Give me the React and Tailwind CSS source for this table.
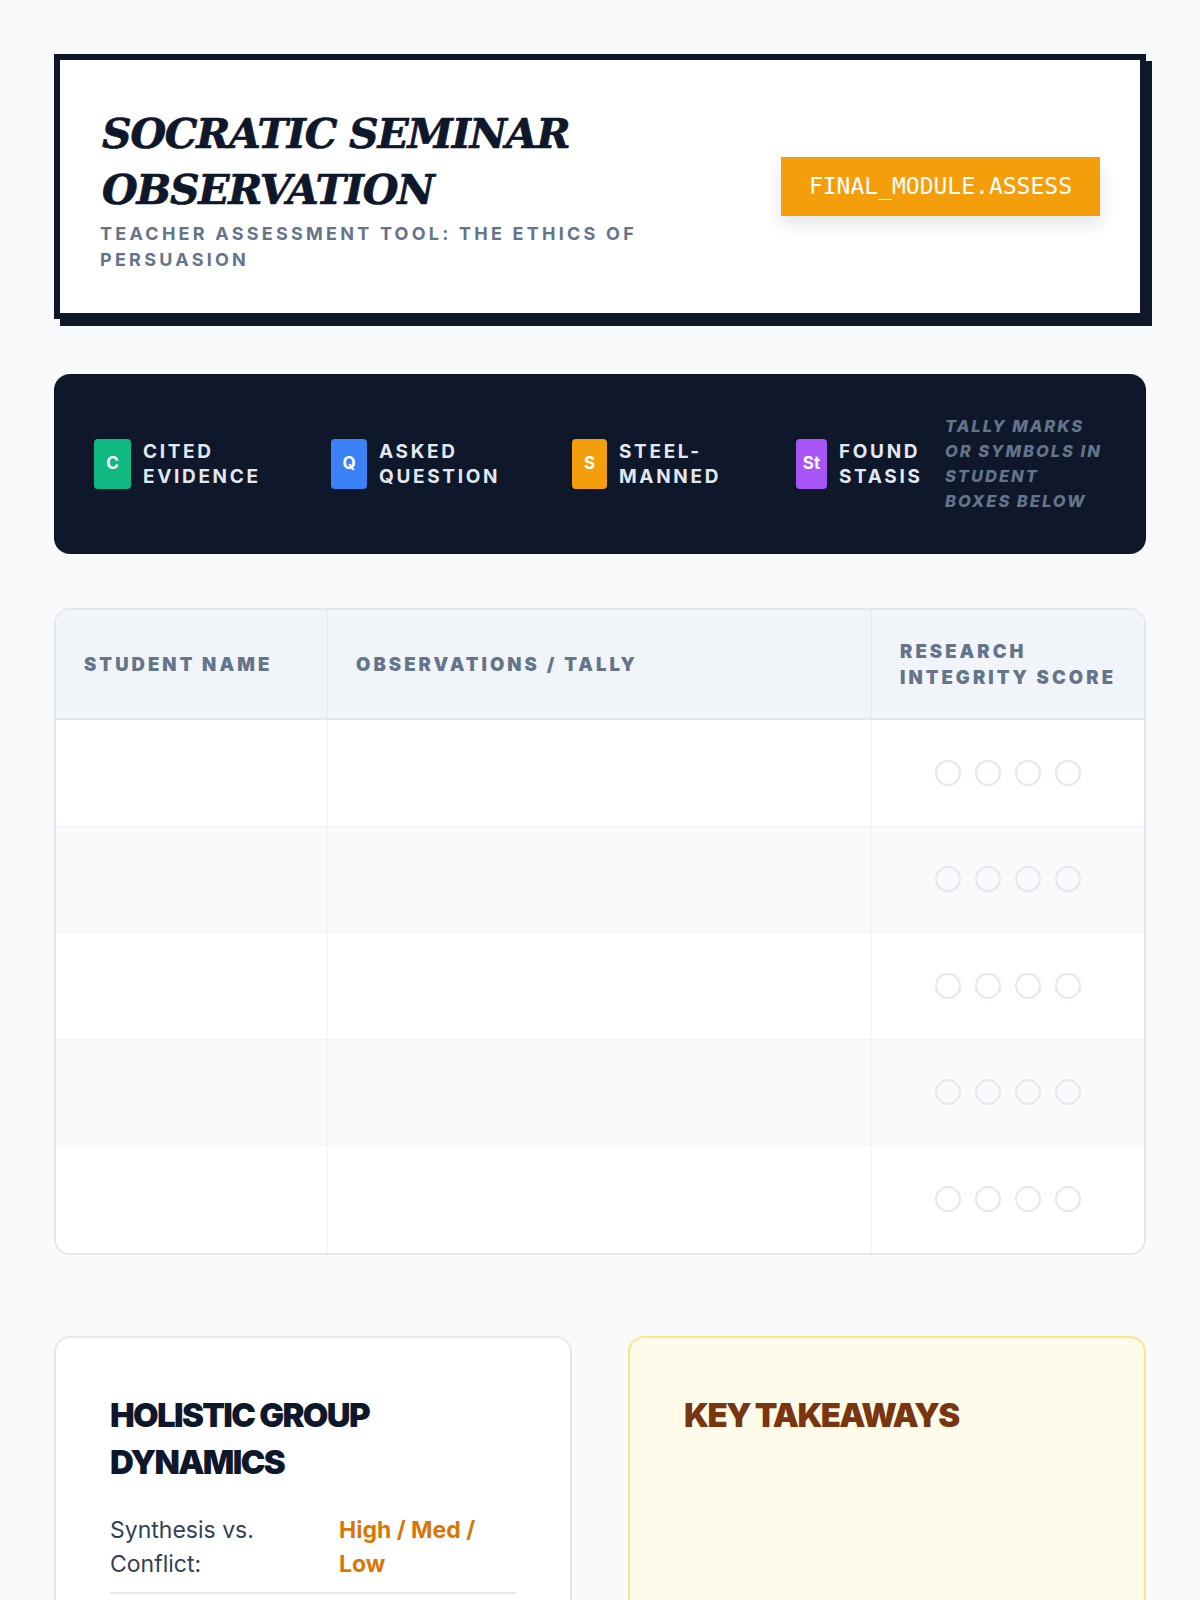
import React from "react";

const legend = [
  { key: "C", label: "Cited Evidence", color: "bg-[#10b981]", w: "w-[213px]", bw: "w-[37px]" },
  { key: "Q", label: "Asked Question", color: "bg-[#3b82f6]", w: "w-[217px]", bw: "w-[36px]" },
  { key: "S", label: "Steel-Manned", color: "bg-[#f59e0b]", w: "w-[200px]", bw: "w-[35px]" },
  { key: "St", label: "Found Stasis", color: "bg-[#a855f7]", w: "w-[125px]", bw: "w-[31px]" },
];

function Circles() {
  return (
    <div className="flex items-center justify-center gap-[14px]">
      {[0, 1, 2, 3].map((i) => (
        <span key={i} className="block h-[26px] w-[26px] rounded-full border-2 border-[#e2e8f0]" />
      ))}
    </div>
  );
}

export default function App() {
  const rows = [0, 1, 2, 3, 4];
  return (
    <div className="min-h-screen bg-[#f8fafc] px-[54px] pt-[54px] pb-16 font-['Inter',sans-serif]">
      {/* Header */}
      <header className="flex items-center justify-between border-[6px] border-[#0f172a] bg-white p-10 shadow-[6px_7px_0_#0f172a]">
        <div className="w-[560px]">
          <h1 className="mt-[6px] pl-[2px] font-['DejaVu_Serif',serif] text-[41px] font-bold italic uppercase leading-[56px] tracking-[-0.03em] text-[#0f172a] [-webkit-text-stroke:0.7px_#0f172a]">
            Socratic Seminar Observation
          </h1>
          <p className="mt-[3px] text-[18px] font-bold uppercase leading-[26px] tracking-[0.18em] text-[#64748b]">
            Teacher Assessment Tool: The Ethics of Persuasion
          </p>
        </div>
        <div className="bg-[#f59e0b] px-7 py-[13px] font-['DejaVu_Sans_Mono',monospace] text-[23px] leading-[33px] text-white shadow-[0_8px_16px_rgba(15,23,42,0.12)]">
          FINAL_MODULE.ASSESS
        </div>
      </header>

      {/* Legend */}
      <section className="mt-[55px] flex items-center gap-6 rounded-2xl bg-[#0f172a] p-10">
        {legend.map((l) => (
          <div key={l.key} className={`flex shrink-0 items-stretch gap-3 ${l.w}`}>
            <span className={`flex shrink-0 items-center justify-center rounded text-[17px] font-bold text-white ${l.color} ${l.bw}`}>
              {l.key}
            </span>
            <span className="text-[19px] font-bold uppercase leading-[25px] tracking-[0.14em] text-[#e2e8f0]">
              {l.label}
            </span>
          </div>
        ))}
        <p className="flex-1 text-[16.5px] font-extrabold italic uppercase leading-[25px] tracking-[0.12em] text-[#64748b]">
          Tally marks or symbols in student boxes below
        </p>
      </section>

      {/* Table */}
      <section className="mt-[54px] overflow-hidden rounded-2xl border-2 border-[#e2e8f0] bg-white">
        <div className="grid grid-cols-[1fr_2fr_1fr] border-b-2 border-[#e2e8f0] bg-[#f1f5f9]">
          {["Student Name", "Observations / Tally", "Research Integrity Score"].map((h, i) => (
            <div
              key={h}
              className={`flex items-center py-[28px] pl-7 pr-3 text-[18.5px] font-black uppercase leading-[26px] tracking-[0.165em] text-[#64748b] ${i < 2 ? "border-r border-[#e2e8f0]" : ""}`}
            >
              {h}
            </div>
          ))}
        </div>
        {rows.map((r) => (
          <div
            key={r}
            className={`grid h-[106.5px] grid-cols-[1fr_2fr_1fr] ${r < 4 ? "border-b border-[#f1f5f9]" : ""} ${r % 2 === 1 ? "bg-[#f8fafc]" : "bg-white"}`}
          >
            <div className="border-r border-[#f1f5f9]" />
            <div className="border-r border-[#f1f5f9]" />
            <div className="flex items-center justify-center">
              <Circles />
            </div>
          </div>
        ))}
      </section>

      {/* Bottom cards */}
      <section className="mt-[81px] grid grid-cols-2 gap-14">
        <div className="rounded-2xl border-2 border-[#e2e8f0] bg-white px-[54px] pt-[54px] pb-[54px]">
          <h2 className="mb-[13px] text-[33px] font-black uppercase leading-[47px] tracking-[-0.05em] text-[#0f172a]">
            Holistic Group Dynamics
          </h2>
          {[
            ["Synthesis vs. Conflict:", "High / Med / Low"],
            ["Equity of Voice:", "High / Med / Low"],
            ["Depth of Inquiry:", "High / Med / Low"],
          ].map(([a, b]) => (
            <div key={a} className="flex border-b-2 border-[#e2e8f0] pt-[14px] pb-[11px] text-[23px] leading-[34px]">
              <span className="w-[229px] shrink-0 pr-8 text-[#334155]">{a}</span>
              <span className="w-[150px] font-bold text-[#d97706]">{b}</span>
            </div>
          ))}
        </div>
        <div className="rounded-2xl border-2 border-[#fde68a] bg-[#fffbeb] px-[54px] pt-[54px] pb-[54px]">
          <h2 className="text-[33px] font-black uppercase leading-[47px] tracking-[-0.05em] text-[#78350f]">
            Key Takeaways
          </h2>
        </div>
      </section>
    </div>
  );
}
